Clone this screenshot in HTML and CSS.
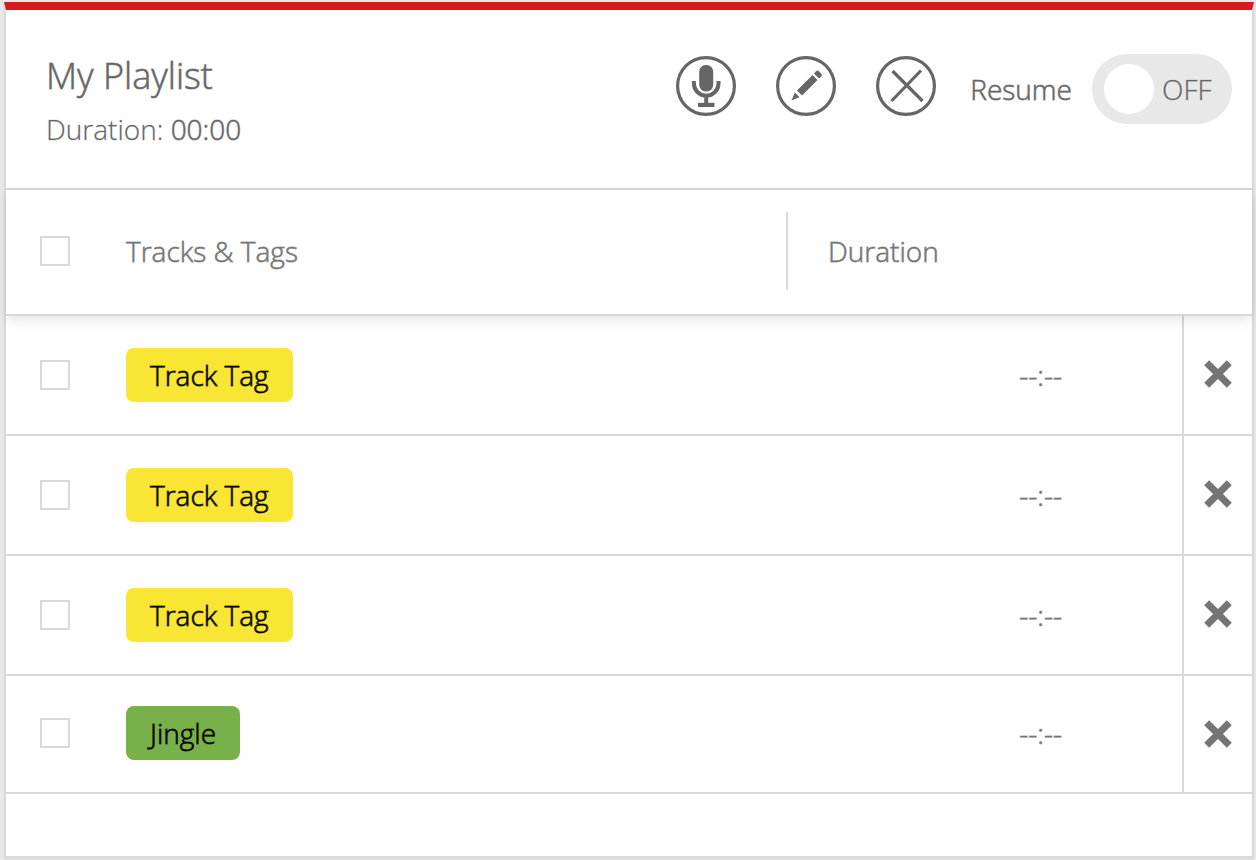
FILE: index.html
```html
<!DOCTYPE html>
<html lang="en">
<head>
    <meta charset="UTF-8">
    <meta name="viewport" content="width=device-width, initial-scale=1.0">
    <title>My Playlist</title>
    <link rel="stylesheet" href="styles.css">
</head>
<body>
    <main class="playlist">
        <header class="playlist-header">
            <div class="playlist-info">
                <h1>My Playlist</h1>
                <p>Duration: <span class="total">00:00</span></p>
            </div>
            <div class="actions">
                <button class="icon-button" type="button" aria-label="Record">
                    <svg viewBox="0 0 60 60" width="60" height="60">
                        <circle cx="30" cy="30" r="28.4" fill="none" stroke="currentColor" stroke-width="3.2"/>
                        <rect x="23.2" y="9" width="14" height="26.4" rx="6.5" fill="currentColor"/>
                        <path d="M17.9 25v2.500a12.300 12.300 0 0 0 24.600 0V25M30.2 40v8" fill="none" stroke="currentColor" stroke-width="4"/>
                        <path d="M22 46.800h16.500v4.200h-16.500z" fill="currentColor"/>
                    </svg>
                </button>
                <button class="icon-button" type="button" aria-label="Edit">
                    <svg viewBox="0 0 60 60" width="60" height="60">
                        <circle cx="30" cy="30" r="28.4" fill="none" stroke="currentColor" stroke-width="3.2"/>
                        <path d="M15.500 44.500L18.800 36.500L23.500 41.300zM21 34.500L36.500 19L41.500 24L26 39.500zM38 17.500L40 15.200Q41.500 14 43 15.300L45.200 17.700Q46.500 19 45.300 20.500L43 22.500z" fill="currentColor"/>
                    </svg>
                </button>
                <button class="icon-button" type="button" aria-label="Close">
                    <svg viewBox="0 0 60 60" width="60" height="60">
                        <circle cx="30" cy="30" r="28.4" fill="none" stroke="currentColor" stroke-width="3.2"/>
                        <path d="M16.500 15L46.500 45M45 14.500L15.500 45" fill="none" stroke="currentColor" stroke-width="3.2"/>
                    </svg>
                </button>
                <label class="resume-label" for="resume">Resume</label>
                <label class="toggle">
                    <input type="checkbox" id="resume">
                    <span>OFF</span>
                </label>
            </div>
        </header>

        <table class="tracks">
            <colgroup>
                <col class="check-width">
                <col>
                <col class="time-width">
                <col class="remove-width">
            </colgroup>
            <thead>
                <tr>
                    <th class="col-check"><input class="check" type="checkbox" aria-label="Select all"></th>
                    <th>Tracks &amp; Tags</th>
                    <th colspan="2"><div class="divided">Duration</div></th>
                </tr>
            </thead>
            <tbody>
                <tr>
                    <td class="col-check"><input class="check" type="checkbox" aria-label="Select track 1"></td>
                    <td><span class="tag">Track Tag</span></td>
                    <td class="time">--:--</td>
                    <td class="col-remove">
                        <button class="remove" type="button" aria-label="Remove track 1">
                            <svg viewBox="0 0 28 28" width="28" height="28"><path d="M2.700 2.700L25.300 25.300M25.300 2.700L2.700 25.300" stroke="currentColor" stroke-width="7"/></svg>
                        </button>
                    </td>
                </tr>
                <tr>
                    <td class="col-check"><input class="check" type="checkbox" aria-label="Select track 2"></td>
                    <td><span class="tag">Track Tag</span></td>
                    <td class="time">--:--</td>
                    <td class="col-remove">
                        <button class="remove" type="button" aria-label="Remove track 2">
                            <svg viewBox="0 0 28 28" width="28" height="28"><path d="M2.700 2.700L25.300 25.300M25.300 2.700L2.700 25.300" stroke="currentColor" stroke-width="7"/></svg>
                        </button>
                    </td>
                </tr>
                <tr>
                    <td class="col-check"><input class="check" type="checkbox" aria-label="Select track 3"></td>
                    <td><span class="tag">Track Tag</span></td>
                    <td class="time">--:--</td>
                    <td class="col-remove">
                        <button class="remove" type="button" aria-label="Remove track 3">
                            <svg viewBox="0 0 28 28" width="28" height="28"><path d="M2.700 2.700L25.300 25.300M25.300 2.700L2.700 25.300" stroke="currentColor" stroke-width="7"/></svg>
                        </button>
                    </td>
                </tr>
                <tr>
                    <td class="col-check"><input class="check" type="checkbox" aria-label="Select jingle"></td>
                    <td><span class="tag tag-jingle">Jingle</span></td>
                    <td class="time">--:--</td>
                    <td class="col-remove">
                        <button class="remove" type="button" aria-label="Remove jingle">
                            <svg viewBox="0 0 28 28" width="28" height="28"><path d="M2.700 2.700L25.300 25.300M25.300 2.700L2.700 25.300" stroke="currentColor" stroke-width="7"/></svg>
                        </button>
                    </td>
                </tr>
            </tbody>
        </table>
    </main>
</body>
</html>
```
FILE: styles.css
```css
* {
    box-sizing: border-box;
}

body {
    margin: 0;
    padding: 2px 2px 2px 4px;
    background-color: #e9e9e9;
    font-family: "Open Sans", sans-serif;
    font-size: 28px;
    font-weight: 300;
    line-height: 38px;
    color: #666;
    -webkit-text-stroke: 1px color-mix(in srgb, currentColor 25%, transparent);
}

.playlist {
    min-height: calc(100vh - 4px);
    background-color: #fff;
    border: 2px solid #d9d9d9;
    border-top: 8px solid #d51b1b;
    box-shadow: 0 2px 2px rgba(0, 0, 0, 0.06);
}

.playlist-header {
    display: flex;
    justify-content: space-between;
    align-items: flex-start;
    padding: 40px 20px;
    border-bottom: 2px solid #d9d9d9;
}

.playlist-info {
    padding-left: 20px;
}

h1 {
    margin: 0 0 8px;
    font-size: 36px;
    font-weight: 300;
    line-height: 52px;
}

p {
    margin: 0;
}

/* light letters with a slightly heavier stroke */
h1,
th,
.total,
.resume-label,
.tag,
.time {
    -webkit-text-stroke: 1px color-mix(in srgb, currentColor 60%, transparent);
}

.actions {
    display: flex;
    align-items: flex-start;
    padding-top: 4px;
}

.icon-button {
    width: 60px;
    height: 60px;
    margin: 2px 40px 0 0;
    padding: 0;
    border: none;
    border-radius: 50%;
    background: none;
    color: #666;
    cursor: pointer;
}

.icon-button svg,
.remove svg {
    display: block;
}

.resume-label {
    margin: 16px 20px 0 -6px;
}

.toggle {
    display: flex;
    align-items: center;
    gap: 8px;
    width: 140px;
    height: 70px;
    padding: 0 12px;
    border-radius: 35px;
    background-color: #e8e8e8;
    cursor: pointer;
}

.toggle input {
    appearance: none;
    width: 50px;
    height: 50px;
    margin: 0;
    border-radius: 50%;
    background-color: #fff;
}

.tracks {
    width: 100%;
    table-layout: fixed;
    border-collapse: separate;
    border-spacing: 0;
}

thead {
    position: relative;
    box-shadow: 0 4px 12px rgba(0, 0, 0, 0.1);
}

th {
    height: 126px;
    padding: 0 0 2px;
    border-bottom: 2px solid #d9d9d9;
    background-color: #fff;
    color: #757575;
    font-weight: 300;
    text-align: left;
}

td {
    height: 120px;
    padding: 0;
    border-bottom: 2px solid #d9d9d9;
}

tbody tr:last-child td {
    height: 118px;
    padding-bottom: 2px;
}

.check-width {
    width: 120px;
}

.time-width {
    width: 396px;
}

.remove-width {
    width: 70px;
}

.col-check {
    padding-left: 34px;
}

.divided {
    padding: 20px 40px;
    border-left: 2px solid #d9d9d9;
}

.check {
    display: block;
    appearance: none;
    width: 30px;
    height: 30px;
    margin: 0;
    border: 2px solid #d9d9d9;
    background-color: #fff;
}

.check:checked {
    background-color: #757575;
}

.tag {
    display: inline-block;
    padding: 8px 24px;
    border-radius: 8px;
    background-color: #f9e533;
    color: #000;
    vertical-align: middle;
}

.tag-jingle {
    background-color: #78b04a;
}

.time {
    padding-right: 120px;
    color: #757575;
    text-align: right;
}

.col-remove {
    padding-bottom: 2px;
    border-left: 2px solid #d9d9d9;
}

tbody tr:last-child .col-remove {
    padding-bottom: 0;
}

.remove {
    display: block;
    margin: 0 auto;
    padding: 0;
    border: none;
    background: none;
    color: #757575;
    cursor: pointer;
}
```
